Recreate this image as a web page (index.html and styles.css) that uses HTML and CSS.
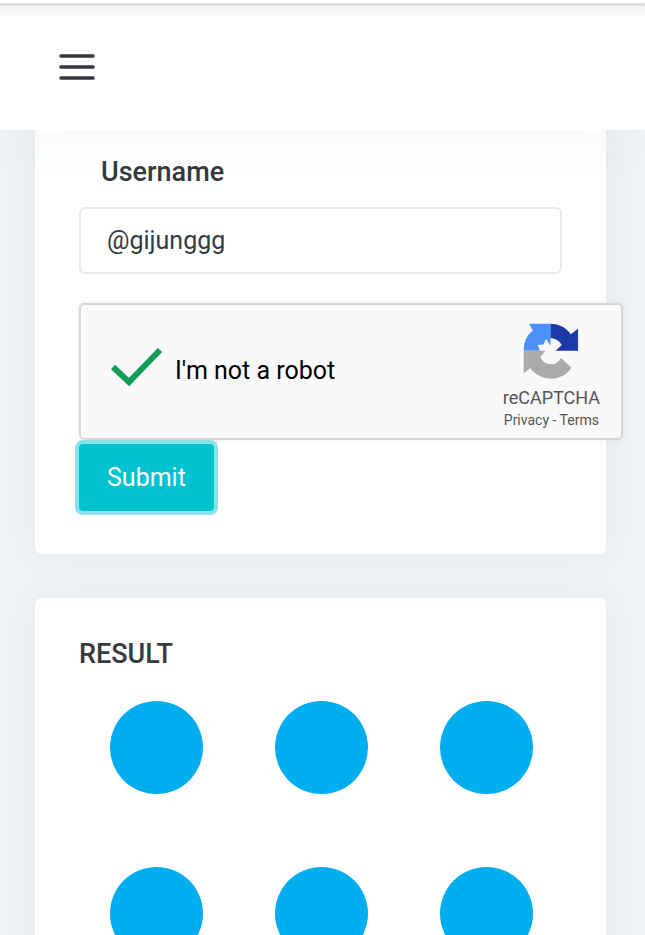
FILE: index.html
```
<!DOCTYPE html>
<html lang="en">
<head>
    <meta charset="UTF-8">
    <meta name="viewport" content="width=device-width, initial-scale=1.0">
    <title>Result</title>
    <link rel="stylesheet" href="styles.css">
</head>
<body>
    <header class="navbar">
        <button type="button" class="menu" aria-label="Menu">
            <svg width="36" height="26" viewBox="0 0 36 26">
                <path d="M2 2H34M2 13H34M2 24H34" stroke="#343a40" stroke-width="3.6" stroke-linecap="round"/>
            </svg>
        </button>
    </header>

    <main class="content">
        <form class="card">
            <label class="title" for="username">Username</label>
            <input type="text" id="username" class="username" value="@gijunggg">

            <div class="captcha">
                <label class="check">
                    <input type="checkbox" checked>
                    <svg class="tick" width="52" height="40" viewBox="0 0 52 40">
                        <path d="M2 20L18 35L49 3" fill="none" stroke="#0f9d58" stroke-width="6"/>
                    </svg>
                    <span>I'm not a robot</span>
                </label>
                <div class="brand">
                    <svg width="56" height="56" viewBox="162 103 165 165">
                        <path fill="#4a90f5" d="M164 185C164 160 173 139 191 126L180 105H243V170L230 150L222 166L205 168L212 185Z"/>
                        <path fill="#1c3aa9" d="M243 105C268 105 290 117 303 136L324 120V185H258L276 168C269 155 257 148 243 148Z"/>
                        <path fill="#ababab" d="M164 185H228L213 203C222 222 240 228 258 222Q268 217 274 206L305 235C275 279 215 276 183 236L164 252Z"/>
                    </svg>
                    <span class="name">reCAPTCHA</span>
                    <span class="links"><a href="#">Privacy</a> - <a href="#">Terms</a></span>
                </div>
            </div>

            <button type="button" class="submit">Submit</button>
        </form>

        <section class="card">
            <h2>RESULT</h2>
            <div class="dots">
                <span></span>
                <span></span>
                <span></span>
                <span></span>
                <span></span>
                <span></span>
            </div>
        </section>
    </main>
</body>
</html>
```
FILE: styles.css
```
* {
    box-sizing: border-box;
}
body {
    display: flex;
    flex-direction: column;
    height: 100vh;
    margin: 0;
    overflow: hidden;
    background-color: #f0f4f6;
    color: #343a40;
    font-family: Roboto, sans-serif;
    font-size: 25px;
}
.navbar {
    display: flex;
    flex: none;
    align-items: center;
    height: 130px;
    padding: 4px 59px 0;
    background: linear-gradient(#fff 3px, #dcdcdc 3px, #dcdcdc 5px, #f4f4f4 7px, #fff 18px);
    box-shadow: 0 0 70px rgba(60, 80, 90, 0.06);
    z-index: 1;
}
.menu {
    display: flex;
    padding: 0;
    border: none;
    background: none;
}
.content {
    display: flex;
    flex: 1;
    flex-direction: column;
    gap: 44px;
    min-height: 0;
    padding: 0 39px 0 35px;
}
.card {
    flex: none;
    padding: 43px 44px;
    border-radius: 7px;
    background-color: #fff;
    box-shadow: 0 0 40px rgba(60, 80, 90, 0.07);
}
form.card {
    padding-top: 24px;
    border-radius: 0 0 7px 7px;
}
.title {
    display: block;
    padding: 0 22px;
    margin-bottom: 16px;
    font-size: 27px;
    font-weight: 500;
    line-height: 37px;
}
.username {
    display: block;
    width: 100%;
    height: 67px;
    padding: 0 26px;
    border: 2px solid #e6ebf0;
    border-radius: 6px;
    color: #343a40;
    font: inherit;
}
.captcha {
    display: flex;
    justify-content: space-between;
    width: calc(100% + 61px);
    height: 137px;
    margin: 29px 0 4px;
    padding: 18px 21px 0 30px;
    border: 2px solid #d6d6d6;
    border-radius: 5px;
    background-color: #f9f9f9;
    box-shadow: 0 0 6px rgba(0, 0, 0, 0.08);
}
.check {
    display: grid;
    grid-template-columns: 52px auto;
    column-gap: 12px;
    align-items: center;
    height: 95px;
    color: #000;
}
.check input {
    grid-area: 1 / 1;
    width: 52px;
    height: 40px;
    margin: 0;
    appearance: none;
}
.tick {
    grid-area: 1 / 1;
    margin-bottom: 8px;
}
.brand {
    display: flex;
    flex-direction: column;
    align-items: center;
    color: #555;
}
.name {
    margin-top: 8px;
    font-size: 18px;
    line-height: 22px;
}
.links {
    font-size: 14px;
    line-height: 22px;
}
.links a {
    color: inherit;
    text-decoration: none;
}
.submit {
    display: block;
    height: 67px;
    padding: 0 28px;
    border: none;
    border-radius: 4px;
    background-color: #00c2d0;
    box-shadow: 0 0 0 4px #8be3e9;
    color: #fff;
    font: inherit;
}
h2 {
    margin: 0 0 33px;
    font-size: 27px;
    font-weight: 500;
    line-height: 27px;
}
.dots {
    display: grid;
    grid-template-columns: repeat(3, 93px);
    justify-content: space-between;
    row-gap: 73px;
    padding: 0 29px 0 31px;
}
.dots span {
    height: 93px;
    border-radius: 50%;
    background-color: #00aeef;
}
```
